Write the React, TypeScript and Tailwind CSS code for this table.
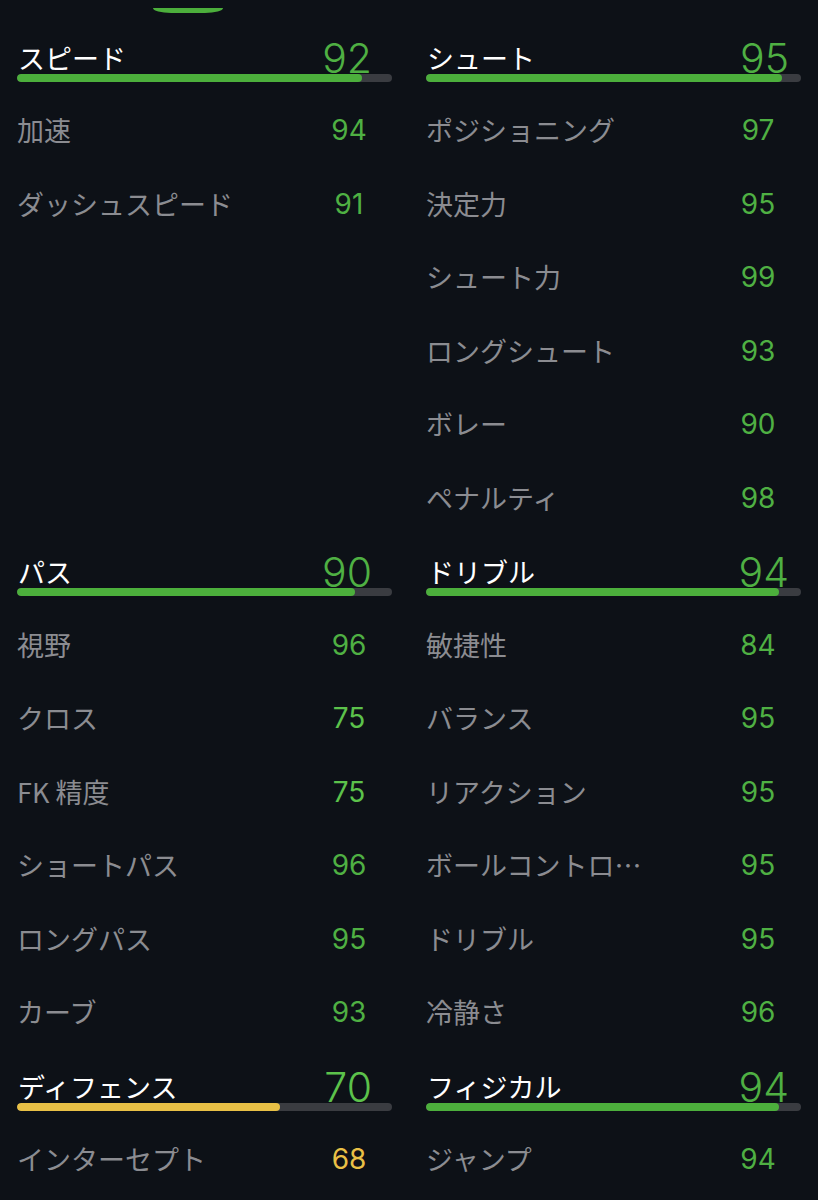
import React from "react";

type Stat = { label: string; value: number };
type Section = { title: string; value: number; stats: Stat[] };

const left: Section[] = [
  { title: "スピード", value: 92, stats: [{ label: "加速", value: 94 }, { label: "ダッシュスピード", value: 91 }] },
  {
    title: "パス",
    value: 90,
    stats: [
      { label: "視野", value: 96 },
      { label: "クロス", value: 75 },
      { label: "FK 精度", value: 75 },
      { label: "ショートパス", value: 96 },
      { label: "ロングパス", value: 95 },
      { label: "カーブ", value: 93 },
    ],
  },
  { title: "ディフェンス", value: 70, stats: [{ label: "インターセプト", value: 68 }] },
];

const right: Section[] = [
  {
    title: "シュート",
    value: 95,
    stats: [
      { label: "ポジショニング", value: 97 },
      { label: "決定力", value: 95 },
      { label: "シュート力", value: 99 },
      { label: "ロングシュート", value: 93 },
      { label: "ボレー", value: 90 },
      { label: "ペナルティ", value: 98 },
    ],
  },
  {
    title: "ドリブル",
    value: 94,
    stats: [
      { label: "敏捷性", value: 84 },
      { label: "バランス", value: 95 },
      { label: "リアクション", value: 95 },
      { label: "ボールコントロール", value: 95 },
      { label: "ドリブル", value: 95 },
      { label: "冷静さ", value: 96 },
    ],
  },
  { title: "フィジカル", value: 94, stats: [{ label: "ジャンプ", value: 94 }] },
];

const jp = "font-['Noto_Sans_CJK_JP',sans-serif]";
const num = "font-['Inter','Liberation_Sans',sans-serif]";

function textColor(v: number) {
  if (v >= 80) return "text-[#4fb043]";
  if (v >= 70) return "text-[#5cc24b]";
  return "text-[#e9c046]";
}

function barColor(v: number) {
  return v >= 80 ? "bg-[#4caf3c]" : "bg-[#e8c046]";
}

function Header({ s, numPad }: { s: Section; numPad: string }) {
  return (
    <div className="h-[73.5px] flex flex-col justify-end pb-[12px]">
      <div className="flex items-end justify-between -mb-[5px] relative z-10">
        <span className={`${jp} text-[27px] leading-[34px] text-white pl-[1px] mb-[4px]`}>{s.title}</span>
        <span className={`${num} text-[41px] font-light leading-none ${textColor(s.value)} ${numPad}`}>{s.value}</span>
      </div>
      <div className="h-2 rounded-full bg-[#3a3c41] overflow-hidden">
        <div className={`h-full rounded-full ${barColor(s.value)}`} style={{ width: `${s.value}%` }} />
      </div>
    </div>
  );
}

function Row({ st }: { st: Stat }) {
  return (
    <div className="h-[73.5px] flex items-center justify-between">
      <span className={`${jp} text-[27px] leading-[40px] text-[#8b8c91] max-w-[225px] truncate`}>{st.label}</span>
      <span className={`${num} w-[60px] mr-[13px] text-center text-[28px] leading-none ${textColor(st.value)}`}>{st.value}</span>
    </div>
  );
}

function Column({ sections, numPad }: { sections: Section[]; numPad: string }) {
  return (
    <div className="flex flex-col">
      {sections.map((s, i) => (
        <div key={s.title} className={i < 2 ? "h-[514.5px]" : ""}>
          <Header s={s} numPad={numPad} />
          {s.stats.map((st) => (
            <Row key={st.label} st={st} />
          ))}
        </div>
      ))}
    </div>
  );
}

export default function App() {
  return (
    <div className="w-[818px] h-[1200px] overflow-hidden bg-[#0d1117]">
      {/* tab indicator */}
      <div className="ml-[153px] mt-[8px] w-[70px] h-[5px] bg-[#4caf3c] rounded-bl-[18px_5px] rounded-br-[18px_5px]" />
      <div className="mt-[7px] px-[17px] grid grid-cols-2 gap-x-[34px]">
        <Column sections={left} numPad="mr-[20px]" />
        <Column sections={right} numPad="mr-[12px]" />
      </div>
    </div>
  );
}
